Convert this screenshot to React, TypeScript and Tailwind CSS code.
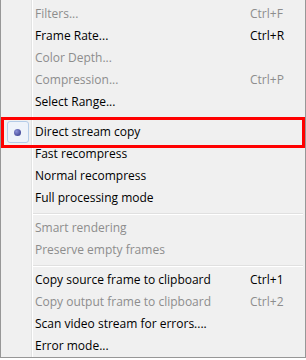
import React from "react";

type Item = { label: string; shortcut?: string; disabled?: boolean; checked?: boolean } | "sep";

const items: Item[] = [
  { label: "Filters...", shortcut: "Ctrl+F", disabled: true },
  { label: "Frame Rate...", shortcut: "Ctrl+R" },
  { label: "Color Depth...", disabled: true },
  { label: "Compression...", shortcut: "Ctrl+P", disabled: true },
  { label: "Select Range..." },
  "sep",
  { label: "Direct stream copy", checked: true },
  { label: "Fast recompress" },
  { label: "Normal recompress" },
  { label: "Full processing mode" },
  "sep",
  { label: "Smart rendering", disabled: true },
  { label: "Preserve empty frames", disabled: true },
  "sep",
  { label: "Copy source frame to clipboard", shortcut: "Ctrl+1" },
  { label: "Copy output frame to clipboard", shortcut: "Ctrl+2", disabled: true },
  { label: "Scan video stream for errors...." },
  { label: "Error mode..." },
];

const Gutter = ({ children }: { children?: React.ReactNode }) => (
  <div className="w-[31px] shrink-0 self-stretch flex items-center justify-center border-r border-r-[#e2e3e3] shadow-[1px_0_0_#ffffff]">
    {children}
  </div>
);

export default function App() {
  return (
    <div className="w-[306px] h-[360px] bg-white font-['Open_Sans',sans-serif] text-[12px]">
      <div className="relative w-[306px] h-[358px] bg-[#f0f0f0] border-x border-b border-[#979797] flex flex-col">
        <div className="flex h-[3px]">
          <Gutter />
        </div>
        {items.map((it, i) =>
          it === "sep" ? (
            <div key={i} className="flex h-[8px]">
              <Gutter />
              <div className="flex-1 flex items-center pl-[1px] pr-[2px]">
                <div className="w-full h-[1px] bg-[#e0e0e0] shadow-[0_1px_0_#ffffff]" />
              </div>
            </div>
          ) : (
            <div
              key={i}
              className={`flex h-[22px] items-center ${it.disabled ? "text-[#8d8d8d]" : "text-black"}`}
            >
              <Gutter>
                {it.checked && (
                  <div className="w-[22px] h-[22px] ml-[3px] rounded-[3px] border border-[#b4cce8] bg-[#eef3fa] flex items-center justify-center">
                    <div className="w-[7px] h-[7px] rounded-full bg-[radial-gradient(circle_at_35%_35%,#8a90d8,#2e3384)]" />
                  </div>
                )}
              </Gutter>
              <div className="flex-1 pl-[3px] whitespace-nowrap leading-none">{it.label}</div>
              <div className="w-[55px] shrink-0 whitespace-nowrap leading-none">{it.shortcut}</div>
            </div>
          )
        )}
        <div className="absolute left-0 top-[117px] w-[304px] h-[31px] border-[3px] border-[#ff0000] pointer-events-none" />
      </div>
    </div>
  );
}
